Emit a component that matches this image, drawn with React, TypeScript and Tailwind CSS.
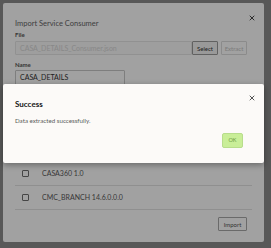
import { X } from "lucide-react";

const font = { fontFamily: "Lato, 'Noto Sans', sans-serif" };

function CheckRow({ label }: { label: string }) {
  return (
    <div className="flex h-[24px] items-center border-b border-[#e3e3e3] pl-[7px]">
      <span className="h-[7px] w-[7px] rounded-[1px] border border-[#6f6f6f] bg-white" />
      <span className="ml-[13px] text-[7px] text-[#5a5a5a]">{label}</span>
    </div>
  );
}

export default function App() {
  return (
    <div style={font} className="relative h-[248px] w-[271px] overflow-hidden bg-[#8c8c8c] p-[3px]">
      {/* import dialog, underneath */}
      <div className="relative flex h-[239px] w-[261px] flex-col rounded-[2px] bg-white px-[12px] pt-[16px]">
        <button className="absolute right-[8px] top-[11px] text-[#222]">
          <X size={8} strokeWidth={2.5} />
        </button>
        <div className="text-[7.5px] leading-[10px] text-[#666]">Import Service Consumer</div>
        <div className="mt-[1px] text-[6px] font-bold leading-[9px] text-[#555]">File</div>
        <div className="mt-[2px] flex items-center">
          <div className="flex h-[14px] w-[177px] items-center rounded-[1px] border border-[#e6e6e6] bg-[#fafafa] px-[4px] text-[7px] text-[#d8d8d8]">
            CASA_DETAILS_Consumer.json
          </div>
          <button className="h-[14px] w-[26px] rounded-[1px] border border-[#9a9a9a] bg-[#f2f2f2] text-[6px] text-[#333]">
            Select
          </button>
          <button className="ml-[3px] h-[14px] w-[26px] rounded-[1px] border border-[#dcdcdc] bg-white text-[6px] text-[#c4c4c4]">
            Extract
          </button>
        </div>
        <div className="mt-[5px] text-[6px] font-bold leading-[9px] text-[#555]">Name</div>
        <div className="mt-[1px] flex h-[15px] w-[110px] items-center rounded-[1px] border border-[#c8c8c8] px-[4px] text-[7px] text-[#333]">
          CASA_DETAILS
        </div>
        {/* rows above these are hidden by the success dialog */}
        <div className="mt-[77px] flex flex-col">
          <CheckRow label="CASA360 1.0" />
          <CheckRow label="CMC_BRANCH 14.6.0.0.0" />
        </div>
        <div className="mt-[7px] flex justify-end pr-[5px]">
          <button className="h-[14px] w-[29px] rounded-[1px] border border-[#a8a8a8] bg-white text-[6px] text-[#555]">
            Import
          </button>
        </div>
      </div>

      {/* backdrop */}
      <div className="absolute inset-0 bg-black/[0.37]" />

      {/* success dialog */}
      <div className="absolute left-[3px] top-[84px] flex h-[79px] w-[261px] flex-col rounded-[2px] bg-[#fcfaf8] px-[12px] pt-[15px] shadow-[0_2px_6px_rgba(0,0,0,0.35)]">
        <button className="absolute right-[8px] top-[10px] text-[#333]">
          <X size={8} strokeWidth={2.5} />
        </button>
        <div className="text-[8px] font-bold leading-[11px] text-[#161616]">Success</div>
        <div className="mt-[6px] text-[6.2px] leading-[9px] text-[#5a5a5a]">Data extracted successfully.</div>
        <div className="mt-[8px] flex justify-end pr-[9px]">
          <button className="h-[15px] w-[21px] rounded-[2px] border border-[#b8dd8c] bg-[#c9ee98] text-[5.5px] text-[#6e9e42]">
            OK
          </button>
        </div>
      </div>
    </div>
  );
}
